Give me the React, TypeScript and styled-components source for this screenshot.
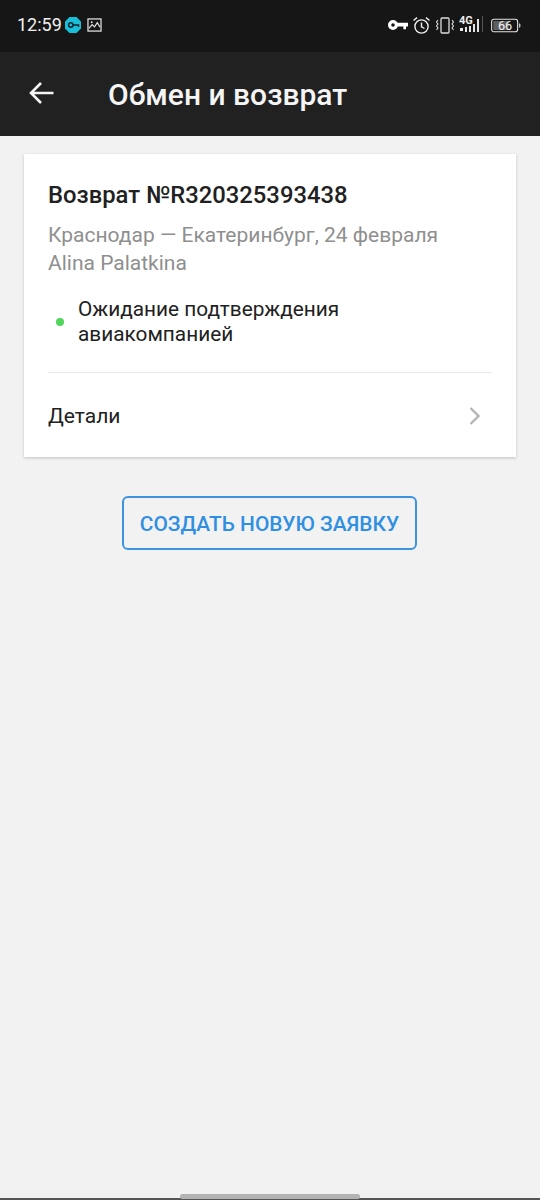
import React from 'react'
import styled, { createGlobalStyle } from 'styled-components'

const GlobalStyle = createGlobalStyle`
  html, body {
    margin: 0;
    padding: 0;
    background: #f2f2f2;
  }

  * {
    box-sizing: border-box;
  }
`

const Screen = styled.div`
  width: 540px;
  height: 1200px;
  display: flex;
  flex-direction: column;
  overflow: hidden;
  background: #f2f2f2;
  font-family: Roboto, 'Noto Sans', sans-serif;
`

const StatusBar = styled.div`
  height: 52px;
  flex: none;
  display: flex;
  align-items: center;
  justify-content: space-between;
  padding: 0 19px 2px 17px;
  background: #161616;
  color: #f0f0f0;
`

const StatusGroup = styled.div`
  display: flex;
  align-items: center;
`

const Clock = styled.span`
  font-size: 18px;
  line-height: 22px;
  margin-right: 2px;
`

const Header = styled.header`
  height: 84px;
  flex: none;
  display: flex;
  align-items: center;
  padding: 0 0 0 29px;
  background: #212121;
`

const BackIcon = styled.svg`
  width: 26px;
  height: 26px;
  flex: none;
  margin-right: 53px;
  margin-top: -3px;
`

const Title = styled.h1`
  margin: 2px 0 0;
  font-size: 30px;
  font-weight: 500;
  line-height: 36px;
  color: #f5f5f5;
`

const Main = styled.main`
  flex: 1;
  display: flex;
  flex-direction: column;
  align-items: center;
  padding: 18px 24px 0;
`

const Card = styled.section`
  width: 492px;
  height: 303px;
  padding: 26px 24px 0;
  background: #fff;
  box-shadow: 0 1px 3px rgba(0, 0, 0, 0.2);
`

const RefundTitle = styled.h2`
  margin: 0 0 11px;
  font-size: 23.8px;
  font-weight: 500;
  line-height: 30px;
  color: #212121;
`

const Meta = styled.div`
  font-size: 21px;
  line-height: 28px;
  color: #8f8f8f;
`

const StatusRow = styled.div`
  display: flex;
  align-items: center;
  margin-top: 20px;
  padding-bottom: 25px;
  border-bottom: 1px solid #e8e8e8;
`

const StatusDot = styled.span`
  width: 8px;
  height: 8px;
  flex: none;
  margin: 0 14px 0 8px;
  border-radius: 50%;
  background: #4fd45c;
`

const StatusText = styled.div`
  font-size: 20.8px;
  line-height: 25px;
  color: #212121;
`

const DetailsRow = styled.div`
  height: 86px;
  display: flex;
  align-items: center;
  justify-content: space-between;
  padding: 0 10px 0 0;
  font-size: 21px;
  color: #212121;
`

const Chevron = styled.svg`
  width: 14px;
  height: 20px;
`

const CreateButton = styled.button`
  width: 295px;
  height: 54px;
  margin: 39px 1px 0 0;
  padding: 1px 0 0;
  background: transparent;
  border: 2px solid #3d93e0;
  border-radius: 6px;
  font-family: inherit;
  font-size: 20.9px;
  font-weight: 500;
  color: #2f8fe2;
`

const NavBar = styled.div`
  height: 6px;
  flex: none;
  display: flex;
  justify-content: center;
  background: linear-gradient(#f2f2f2 0 4px, #555 4px);
`

const HomeIndicator = styled.div`
  width: 180px;
  height: 5px;
  border-radius: 3px;
  background: #b3b3b3;
`

const App: React.FC = () => (
  <Screen>
    <GlobalStyle />

    {/* status bar */}
    <StatusBar>
      <StatusGroup>
        <Clock>12:59</Clock>
        <svg width="18" height="18" viewBox="0 0 18 18">
          <path d="M5.5 1h7L17 5.5v7L12.5 17h-7L1 12.5v-7z" fill="#19bfd6" />
          <circle cx="6.8" cy="9" r="2.2" fill="none" stroke="#123" strokeWidth="1.5" />
          <path d="M9 9h5.5v2" fill="none" stroke="#123" strokeWidth="1.5" />
        </svg>
        <svg width="15" height="14" viewBox="0 0 16 15" style={{ marginLeft: 5 }}>
          <rect x="1" y="1" width="14" height="13" fill="none" stroke="#e8e8e8" strokeWidth="1.3" />
          <path d="M2 11l3.5-4 2.5 2.5L11 5l3 5" fill="none" stroke="#e8e8e8" strokeWidth="1.2" />
          <circle cx="5" cy="4.5" r="1" fill="#e8e8e8" />
        </svg>
      </StatusGroup>
      <StatusGroup>
        <svg width="20" height="12" viewBox="0 0 20 12">
          <circle cx="5" cy="6" r="3.4" fill="none" stroke="#fff" strokeWidth="3.2" />
          <path d="M8 3.8h12v3.8h-2v2.6h-2.6V7.6H8z" fill="#fff" />
        </svg>
        <svg width="19" height="19" viewBox="0 0 19 19" style={{ marginLeft: 4 }}>
          <circle cx="9.5" cy="10.5" r="6.6" fill="none" stroke="#eee" strokeWidth="1.4" />
          <path d="M9.5 6.5v4.4l3 1.6M1.5 4.5L5 1.6M17.5 4.5L14 1.6" fill="none" stroke="#eee" strokeWidth="1.4" />
        </svg>
        <svg width="18" height="17" viewBox="1 0 18 17" style={{ marginLeft: 5 }}>
          <rect x="6" y="1" width="8" height="15" rx="1" fill="none" stroke="#ddd" strokeWidth="1.3" />
          <path d="M3 3l-1.5 2L3 7 1.5 9 3 11l-1.5 2M17 3l1.5 2L17 7l1.5 2L17 11l1.5 2" fill="none" stroke="#ddd" strokeWidth="1.1" />
        </svg>
        <svg width="25" height="20" viewBox="0 0 25 20" style={{ marginLeft: 5 }}>
          <text x="0" y="9" fontFamily="Roboto, sans-serif" fontSize="11" fontWeight="700" fill="#eee">4G</text>
          <path d="M1 13h3v3H1zM6 12h2v5H6zM10 11h2v6h-2zM14 9h2v8h-2zM18 4h2v13h-2z" fill="#e4e4e4" />
          <path d="M23 1h1v16h-1z" fill="#555" />
        </svg>
        <svg width="30" height="15" viewBox="0 0 33 15" style={{ marginLeft: 7 }}>
          <rect x="0.7" y="0.7" width="28.6" height="13.6" rx="2.5" fill="none" stroke="#e4e4e4" strokeWidth="1.2" />
          <rect x="2.5" y="2.5" width="17" height="10" fill="#5e5e5e" />
          <path d="M31 5c1 .4 1.4 1.2 1.4 2.5s-.4 2.1-1.4 2.5z" fill="#e4e4e4" />
          <text x="15.5" y="12.5" textAnchor="middle" fontFamily="Roboto, sans-serif" fontSize="14" fill="#f4f4f4">66</text>
        </svg>
      </StatusGroup>
    </StatusBar>

    <Header>
      <BackIcon viewBox="0 0 26 26">
        <path d="M24.5 13H2M12 3L2 13l10 10" fill="none" stroke="#f5f5f5" strokeWidth="2.6" />
      </BackIcon>
      <Title>Обмен и возврат</Title>
    </Header>

    <Main>
      <Card>
        <RefundTitle>Возврат №R320325393438</RefundTitle>
        <Meta>Краснодар — Екатеринбург, 24 февраля</Meta>
        <Meta>Alina Palatkina</Meta>

        <StatusRow>
          <StatusDot />
          <StatusText>
            Ожидание подтверждения
            <br />
            авиакомпанией
          </StatusText>
        </StatusRow>

        {/* details link */}
        <DetailsRow>
          Детали
          <Chevron viewBox="0 0 14 20">
            <path d="M2.5 2l8 8-8 8" fill="none" stroke="#b5b5b5" strokeWidth="2.4" />
          </Chevron>
        </DetailsRow>
      </Card>

      <CreateButton>СОЗДАТЬ НОВУЮ ЗАЯВКУ</CreateButton>
    </Main>

    <NavBar>
      <HomeIndicator />
    </NavBar>
  </Screen>
)

export default App
